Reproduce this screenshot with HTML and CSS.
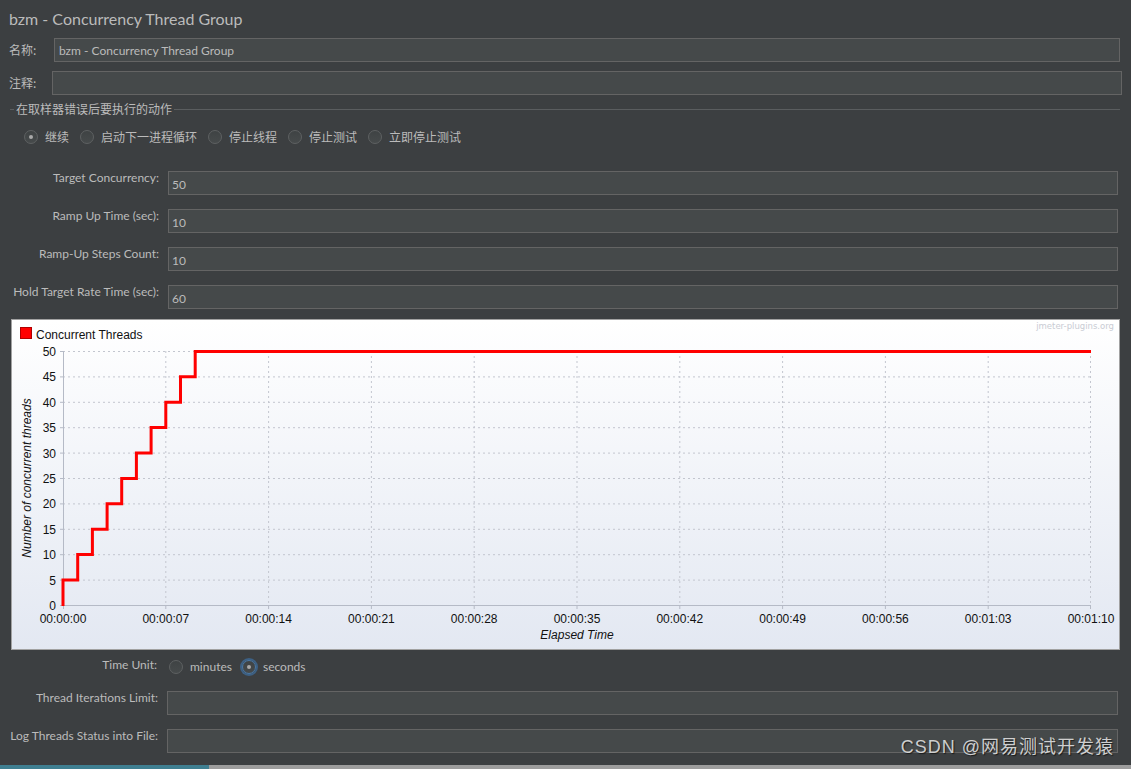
FILE: index.html
```html
<!DOCTYPE html>
<html>
<head>
<meta charset="utf-8">
<link rel="stylesheet" href="styles.css">
</head>
<body>
<div class="page">
  <div class="title">bzm - Concurrency Thread Group</div>
  <div class="line-row name-row">
    <span class="lbl cjk">名称:</span>
    <div class="field name-field">bzm - Concurrency Thread Group</div>
  </div>
  <div class="line-row comment-row">
    <span class="lbl cjk">注释:</span>
    <div class="field comment-field"></div>
  </div>
  <div class="group-title">
    <span class="dash"></span>
    <span class="cjk gt-text">在取样器错误后要执行的动作</span>
    <span class="rule"></span>
  </div>
  <div class="radios cjk">
    <span class="radio checked"></span><span class="rtext">继续</span>
    <span class="radio"></span><span class="rtext">启动下一进程循环</span>
    <span class="radio"></span><span class="rtext">停止线程</span>
    <span class="radio"></span><span class="rtext">停止测试</span>
    <span class="radio"></span><span class="rtext">立即停止测试</span>
  </div>
  <div class="form">
    <span class="flabel">Target Concurrency:</span><div class="field val">50</div>
    <span class="flabel">Ramp Up Time (sec):</span><div class="field val">10</div>
    <span class="flabel">Ramp-Up Steps Count:</span><div class="field val">10</div>
    <span class="flabel">Hold Target Rate Time (sec):</span><div class="field val">60</div>
  </div>
  <div class="chart">
    <svg class="chart-svg" width="1107" height="329" viewBox="12 320 1107 329" xmlns="http://www.w3.org/2000/svg">
      <defs>
        <linearGradient id="bg" x1="0" y1="0" x2="0" y2="1">
          <stop offset="0" stop-color="#ffffff"/>
          <stop offset="1" stop-color="#e3e8f2"/>
        </linearGradient>
      </defs>
      <rect x="12" y="320" width="1107" height="329" fill="url(#bg)"/>
      <g stroke="#c3c6cf" stroke-width="1" stroke-dasharray="2 3" fill="none">
        <line x1="63" y1="351.5" x2="1091" y2="351.5"/>
        <line x1="63" y1="376.9" x2="1091" y2="376.9"/>
        <line x1="63" y1="402.3" x2="1091" y2="402.3"/>
        <line x1="63" y1="427.7" x2="1091" y2="427.7"/>
        <line x1="63" y1="453.1" x2="1091" y2="453.1"/>
        <line x1="63" y1="478.5" x2="1091" y2="478.5"/>
        <line x1="63" y1="503.9" x2="1091" y2="503.9"/>
        <line x1="63" y1="529.3" x2="1091" y2="529.3"/>
        <line x1="63" y1="554.7" x2="1091" y2="554.7"/>
        <line x1="63" y1="580.1" x2="1091" y2="580.1"/>
        <line x1="165.8" y1="351" x2="165.8" y2="605"/>
        <line x1="268.6" y1="351" x2="268.6" y2="605"/>
        <line x1="371.4" y1="351" x2="371.4" y2="605"/>
        <line x1="474.2" y1="351" x2="474.2" y2="605"/>
        <line x1="577" y1="351" x2="577" y2="605"/>
        <line x1="679.8" y1="351" x2="679.8" y2="605"/>
        <line x1="782.6" y1="351" x2="782.6" y2="605"/>
        <line x1="885.4" y1="351" x2="885.4" y2="605"/>
        <line x1="988.2" y1="351" x2="988.2" y2="605"/>
        <line x1="1090.5" y1="351" x2="1090.5" y2="605"/>
      </g>
      <g stroke="#b5bac6" stroke-width="1">
        <line x1="63.5" y1="351" x2="63.5" y2="606"/>
        <line x1="60" y1="605.5" x2="1091" y2="605.5"/>
        <line x1="60" y1="351.5" x2="63" y2="351.5"/>
        <line x1="60" y1="376.9" x2="63" y2="376.9"/>
        <line x1="60" y1="402.3" x2="63" y2="402.3"/>
        <line x1="60" y1="427.7" x2="63" y2="427.7"/>
        <line x1="60" y1="453.1" x2="63" y2="453.1"/>
        <line x1="60" y1="478.5" x2="63" y2="478.5"/>
        <line x1="60" y1="503.9" x2="63" y2="503.9"/>
        <line x1="60" y1="529.3" x2="63" y2="529.3"/>
        <line x1="60" y1="554.7" x2="63" y2="554.7"/>
        <line x1="60" y1="580.1" x2="63" y2="580.1"/>
        <line x1="63.5" y1="606" x2="63.5" y2="609"/>
        <line x1="165.8" y1="606" x2="165.8" y2="609"/>
        <line x1="268.6" y1="606" x2="268.6" y2="609"/>
        <line x1="371.4" y1="606" x2="371.4" y2="609"/>
        <line x1="474.2" y1="606" x2="474.2" y2="609"/>
        <line x1="577" y1="606" x2="577" y2="609"/>
        <line x1="679.8" y1="606" x2="679.8" y2="609"/>
        <line x1="782.6" y1="606" x2="782.6" y2="609"/>
        <line x1="885.4" y1="606" x2="885.4" y2="609"/>
        <line x1="988.2" y1="606" x2="988.2" y2="609"/>
        <line x1="1090.5" y1="606" x2="1090.5" y2="609"/>
      </g>
      <g class="ax" text-anchor="end">
        <text x="56" y="356">50</text>
        <text x="56" y="381">45</text>
        <text x="56" y="407">40</text>
        <text x="56" y="432">35</text>
        <text x="56" y="458">30</text>
        <text x="56" y="483">25</text>
        <text x="56" y="508">20</text>
        <text x="56" y="534">15</text>
        <text x="56" y="559">10</text>
        <text x="56" y="585">5</text>
        <text x="56" y="610">0</text>
      </g>
      <g class="ax" text-anchor="middle">
        <text x="63" y="623">00:00:00</text>
        <text x="165.8" y="623">00:00:07</text>
        <text x="268.6" y="623">00:00:14</text>
        <text x="371.4" y="623">00:00:21</text>
        <text x="474.2" y="623">00:00:28</text>
        <text x="577" y="623">00:00:35</text>
        <text x="679.8" y="623">00:00:42</text>
        <text x="782.6" y="623">00:00:49</text>
        <text x="885.4" y="623">00:00:56</text>
        <text x="988.2" y="623">00:01:03</text>
        <text x="1091" y="623">00:01:10</text>
      </g>
      <text class="ax it" x="577" y="639" text-anchor="middle">Elapsed Time</text>
      <text class="ax it" x="0" y="0" text-anchor="middle" transform="translate(31 478) rotate(-90)">Number of concurrent threads</text>
      <polyline fill="none" stroke="#ff0000" stroke-width="3" stroke-linejoin="miter" points="63,606 63,580 77.7,580 77.7,554.6 92.4,554.6 92.4,529.2 107.1,529.2 107.1,503.8 121.7,503.8 121.7,478.4 136.4,478.4 136.4,453 151.1,453 151.1,427.6 165.8,427.6 165.8,402.2 180.5,402.2 180.5,376.8 195.2,376.8 195.2,351.5 1091,351.5"/>
      <rect x="20.5" y="327.5" width="11" height="11" fill="#ff0000" stroke="#b00000"/>
      <text class="ax" x="36" y="339">Concurrent Threads</text>
      <text class="wm" x="1114" y="329" text-anchor="end">jmeter-plugins.org</text>
    </svg>
  </div>
  <div class="unit-row">
    <span class="ulabel">Time Unit:</span>
    <span class="radio"></span><span class="utext">minutes</span>
    <span class="radio checked focus"></span><span class="utext">seconds</span>
  </div>
  <div class="form2">
    <span class="flabel">Thread Iterations Limit:</span><div class="field"></div>
    <span class="flabel">Log Threads Status into File:</span><div class="field"></div>
  </div>
  <div class="strip"><span class="teal"></span><span class="grey"></span></div>
  <div class="watermark">CSDN @网易测试开发猿</div>
</div>
</body>
</html>
```
FILE: styles.css
```css
html, body {
  margin: 0;
  padding: 0;
  background: #3c3f41;
}
body {
  width: 1131px;
  height: 769px;
  overflow: hidden;
  font-family: Lato, "Noto Sans CJK SC", sans-serif;
  color: #bbbbbb;
  font-size: 12px;
}
.page {
  position: relative;
  width: 1131px;
  height: 769px;
  display: flex;
  flex-direction: column;
}
.cjk {
  font-family: "Noto Sans CJK SC", sans-serif;
}
.title {
  margin-top: 8px;
  height: 22px;
  line-height: 22px;
  padding-left: 9px;
  font-size: 16px;
  color: #bbbbbb;
}
.line-row {
  display: flex;
  align-items: center;
  height: 24px;
}
.name-row { margin-top: 8px; }
.comment-row { margin-top: 9px; }
.lbl {
  padding-left: 9px;
  font-size: 12px;
  line-height: 14px;
}
.name-row .lbl { width: 45px; }
.comment-row .lbl { width: 43px; }
.field {
  box-sizing: border-box;
  height: 24px;
  background: #45494a;
  border: 1px solid #646464;
  color: #bbbbbb;
  font-size: 12px;
  line-height: 22px;
  padding-left: 4px;
}
.name-field { width: 1066px; line-height: 23px; }
.comment-field { width: 1070px; }
.group-title {
  margin-top: 7px;
  height: 14px;
  display: flex;
  align-items: center;
  width: 1120px;
}
.group-title .dash {
  margin-left: 10px;
  width: 4px;
  border-top: 1px solid #5a5d5f;
}
.gt-text {
  font-size: 12px;
  line-height: 14px;
  padding: 0 2px 0 2px;
  color: #bbbbbb;
}
.group-title .rule {
  flex: 1;
  border-top: 1px solid #5a5d5f;
}
.radios {
  margin-top: 14px;
  height: 14px;
  display: flex;
  align-items: center;
  padding-left: 24px;
  font-size: 12px;
}
.radio {
  box-sizing: border-box;
  width: 14px;
  height: 14px;
  border-radius: 50%;
  border: 1px solid #5e6162;
  background: linear-gradient(#3f4344, #464a4b);
  display: flex;
  align-items: center;
  justify-content: center;
  flex: none;
}
.radio.checked::after {
  content: "";
  width: 4px;
  height: 4px;
  border-radius: 50%;
  background: #a9a9a9;
}
.radio.focus {
  box-shadow: 0 0 0 2px #3d6185;
  border-color: #4a7aa8;
}
.rtext {
  margin-left: 7px;
  margin-right: 11px;
  line-height: 14px;
}
.form {
  margin-top: 27px;
  display: grid;
  grid-template-columns: 159px 950px;
  column-gap: 9px;
  row-gap: 14px;
  align-items: start;
}
.flabel {
  text-align: right;
  line-height: 14px;
  font-size: 12px;
}
.val {
  padding-top: 2px;
  padding-left: 3px;
}
.chart {
  margin-top: 10px;
  margin-left: 11px;
  width: 1109px;
  height: 331px;
  box-sizing: border-box;
  border: 1px solid #a2a2a2;
  background: #ffffff;
}
.chart-svg {
  display: block;
}
.ax {
  font-family: "Liberation Sans", Arial, sans-serif;
  font-size: 12px;
  fill: #111111;
}
.it {
  font-style: italic;
}
.wm {
  font-family: "DejaVu Sans", sans-serif;
  font-size: 8.5px;
  fill: #c9ccd4;
}
.unit-row {
  margin-top: 10px;
  height: 14px;
  display: flex;
  align-items: center;
}
.ulabel {
  width: 157px;
  text-align: right;
  margin-right: 12px;
  line-height: 14px;
  position: relative;
  top: -2px;
}
.utext {
  margin-left: 7px;
  margin-right: 10px;
  line-height: 14px;
}
.form2 {
  margin-top: 17px;
  display: grid;
  grid-template-columns: 158px 951px;
  column-gap: 9px;
  row-gap: 14px;
  align-items: start;
}
.strip {
  margin-top: 12px;
  height: 4px;
  display: flex;
}
.strip .teal {
  width: 209px;
  background: #3f7f91;
}
.strip .grey {
  flex: 1;
  background: #9d9d9d;
}
.watermark {
  position: absolute;
  right: 17px;
  top: 736px;
  font-family: "Liberation Sans", "Noto Sans CJK SC", sans-serif;
  font-size: 18px;
  letter-spacing: 1px;
  line-height: 22px;
  color: rgba(235, 235, 235, 0.85);
  text-shadow: 1px 1px 1px rgba(0, 0, 0, 0.6);
}
```
